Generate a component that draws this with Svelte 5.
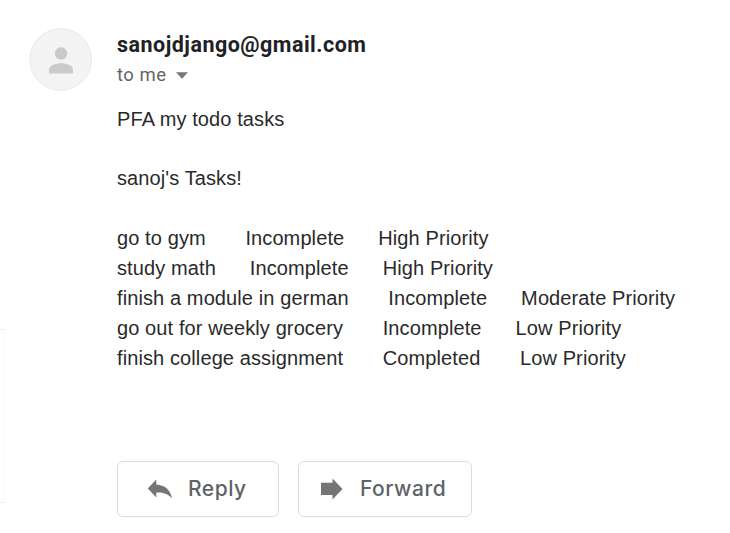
<script>
  const gap = (n) => '\u00a0'.repeat(n);
  const tasks = [
    ['go to gym', 7, 'Incomplete', 6, 'High Priority'],
    ['study math', 6, 'Incomplete', 6, 'High Priority'],
    ['finish a module in german', 7, 'Incomplete', 6, 'Moderate Priority'],
    ['go out for weekly grocery', 7, 'Incomplete', 6, 'Low Priority'],
    ['finish college assignment', 7, 'Completed', 7, 'Low Priority'],
  ];
</script>

<main class="mail">
  <div class="edge"></div>
  <div class="avatar">
    <svg width="63" height="63" viewBox="0 0 63 63">
      <circle cx="31.7" cy="31.5" r="30.8" fill="#f4f4f4" stroke="#e2e2e2" stroke-width="0.8" />
      <circle cx="32" cy="25.500" r="6.2" fill="#cacaca" />
      <path d="M20 45.5v-4c0-4.2 7-6.3 12-6.3s12 2.1 12 6.3v4z" fill="#cacaca" />
    </svg>
  </div>
  <div class="content">
    <div class="sender">sanojdjango@gmail.com</div>
    <div class="to">
      <span>to me</span>
      <svg width="12" height="7" viewBox="0 0 12 7"><path d="M0 .3h12L6 6.7z" fill="#777" /></svg>
    </div>
    <div class="body">
      <p class="intro">PFA my todo tasks</p>
      <p class="title">sanoj's Tasks!</p>
      {#each tasks as [name, a, status, b, priority]}
        <div class="task">{name}{gap(a)}{status}{gap(b)}{priority}</div>
      {/each}
    </div>
    <div class="actions">
      <button class="reply">
        <svg width="26" height="20" viewBox="0 0 26 20"><path d="M.8 9.500 9.300.500v5C17.500 6 23.500 10.500 25 19.300 20.500 14.300 16 13.300 9.300 13.500v5z" fill="#757575" /></svg>
        <span>Reply</span>
      </button>
      <button class="forward">
        <svg width="22" height="22" viewBox="0 0 22 22"><path d="M0 4.800h11.500V.5L21.500 11 11.500 21.500v-4.500H0z" fill="#757575" /></svg>
        <span>Forward</span>
      </button>
    </div>
  </div>
</main>

<style>
  :global(body) {
    background: #fff;
  }
  .mail {
    position: relative;
    box-sizing: border-box;
    display: flex;
    width: 730px;
    height: 533px;
    overflow: hidden;
    padding: 28px 0 0 29px;
    background: #fff;
  }
  .edge {
    position: absolute;
    left: 0;
    top: 329px;
    width: 4px;
    height: 172px;
    border: 1px solid #efefef;
    border-right-color: #fafafa;
    border-left: 0;
  }
  .avatar {
    width: 88px;
    flex: none;
  }
  .avatar svg,
  .to svg,
  button svg {
    display: block;
    flex: none;
  }
  .sender {
    height: 33px;
    font: 700 21.5px/34px Roboto, sans-serif;
    letter-spacing: 0.48px;
    color: #202124;
    white-space: nowrap;
  }
  .to {
    display: flex;
    align-items: center;
    gap: 9px;
    height: 28px;
    font: 400 18.5px/28px Roboto, sans-serif;
    letter-spacing: 0.5px;
    color: #5f6368;
  }
  .body {
    margin-top: 15px;
    font: 400 20px/30px "Liberation Sans", Arial, sans-serif;
    letter-spacing: 0.105px;
    color: #2a2a2a;
    white-space: nowrap;
  }
  p {
    margin: 0;
  }
  .intro {
    height: 59px;
  }
  .title {
    height: 60px;
  }
  .task {
    height: 30px;
  }
  .actions {
    display: flex;
    gap: 19px;
    margin-top: 88px;
  }
  button {
    box-sizing: border-box;
    display: flex;
    align-items: center;
    height: 56px;
    padding: 0;
    border: 1.500px solid #dadce0;
    border-radius: 6px;
    background: #fff;
    font: 500 21px/54px Inter, sans-serif;
    letter-spacing: 0.5px;
    color: #5f6368;
  }
  .reply {
    width: 162px;
    padding-left: 29px;
    gap: 15px;
  }
  .forward {
    width: 174px;
    padding-left: 22px;
    gap: 17px;
  }
</style>
